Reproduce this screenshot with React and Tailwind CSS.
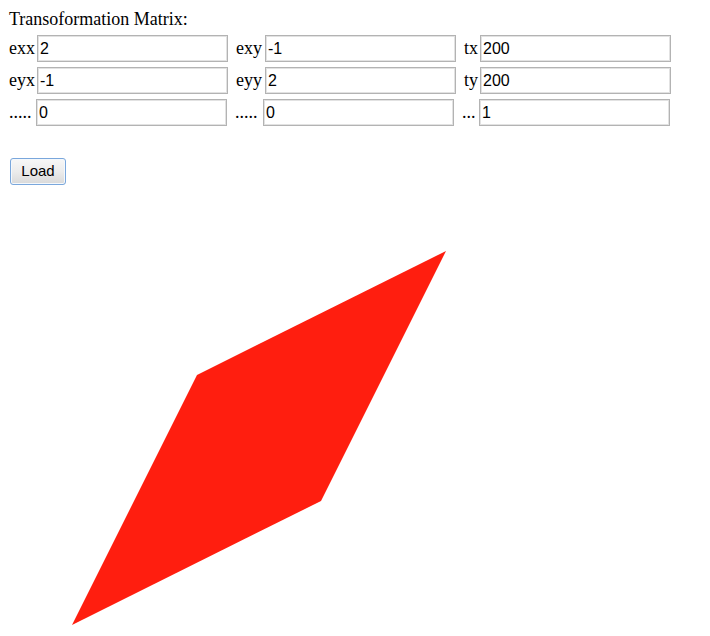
import React from 'react'

const rows = [
    [
        { label: 'exx', value: '2', lw: 'w-[28px]' },
        { label: 'exy', value: '-1', lw: 'w-[29px]' },
        { label: 'tx', value: '200', lw: 'w-[16px]' },
    ],
    [
        { label: 'eyx', value: '-1', lw: 'w-[28px]' },
        { label: 'eyy', value: '2', lw: 'w-[29px]' },
        { label: 'ty', value: '200', lw: 'w-[16px]' },
    ],
    [
        { label: '.....', value: '0', lw: 'w-[27px]' },
        { label: '.....', value: '0', lw: 'w-[28px]' },
        { label: '...', value: '1', lw: 'w-[17px]' },
    ],
]

const MatrixRow = ({ cells }) => (
    <div className="flex items-center">
        {cells.map((c, i) => (
            <div key={i} className={i > 0 ? 'ml-[8px] flex items-center' : 'flex items-center'}>
                <span className={`${c.lw} text-[18px] leading-[21px] text-black`}>{c.label}</span>
                <input
                    type="text"
                    defaultValue={c.value}
                    className="h-[27px] w-[191px] border border-[#b3b3b3] bg-white px-[2px] text-[16px] text-black shadow-[inset_0_0_0_1px_#e2e2e2] outline-none"
                    style={{ fontFamily: '"Liberation Sans", Arial, sans-serif' }}
                />
            </div>
        ))}
    </div>
)

const App = () => {
    return (
        <div className="min-h-screen bg-white pl-[9px] pt-[9px]" style={{ fontFamily: '"Liberation Serif", "Times New Roman", serif' }}>
            <div className="mb-[5px] text-[18px] leading-[21px] text-black">Transoformation Matrix:</div>

            <div className="flex flex-col gap-[5px]">
                {rows.map((r, i) => (
                    <MatrixRow key={i} cells={r} />
                ))}
            </div>

            <button
                type="button"
                className="ml-[1px] mt-[32px] block h-[27px] w-[56px] rounded-[3px] border border-[#7aa7dc] bg-linear-to-b from-[#f7f7f7] via-[#ececec] to-[#d9d9d9] text-[15px] text-black shadow-[inset_0_0_0_1px_#f4f8fc]"
                style={{ fontFamily: '"Liberation Sans", Arial, sans-serif' }}
            >
                Load
            </button>

            {/* transformed square, matrix 2,-1,-1,2,200,200 */}
            <svg width="690" height="444" className="mt-[2px] block">
                <polygon points="437,64 188,188 63,438 312,314" fill="#ff1e0f" />
            </svg>
        </div>
    )
}

export default App
